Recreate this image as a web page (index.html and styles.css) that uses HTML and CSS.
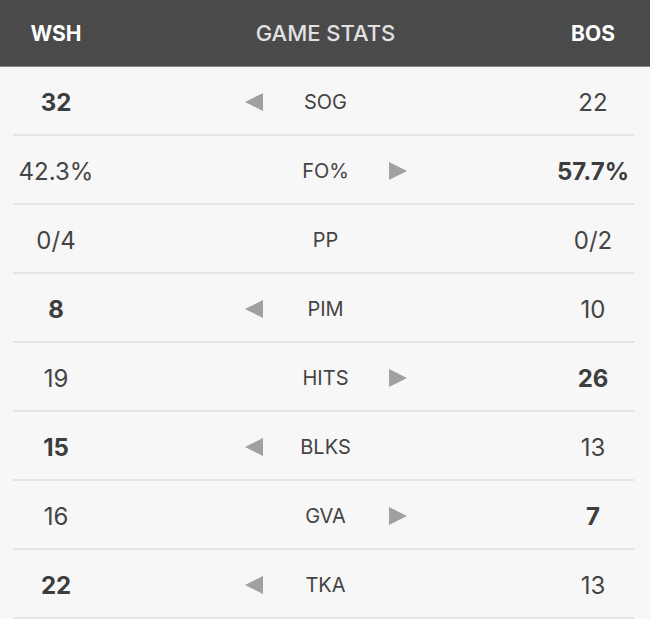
FILE: index.html
```html
<!DOCTYPE html>
<html lang="en">
<head>
<meta charset="utf-8">
<title>Game Stats</title>
<link rel="stylesheet" href="styles.css">
</head>
<body>
<div class="stats">
  <header class="head">
    <div class="grid">
      <div class="team">WSH</div>
      <div class="title">GAME STATS</div>
      <div class="team">BOS</div>
    </div>
  </header>
  <div class="row"><div class="grid">
    <div class="val bold">32</div>
    <div class="mid"><span class="tri left"></span><span class="label">SOG</span><span class="tri"></span></div>
    <div class="val">22</div>
  </div></div>
  <div class="row"><div class="grid">
    <div class="val">42.3%</div>
    <div class="mid"><span class="tri"></span><span class="label">FO%</span><span class="tri right"></span></div>
    <div class="val bold">57.7%</div>
  </div></div>
  <div class="row"><div class="grid">
    <div class="val">0/4</div>
    <div class="mid"><span class="tri"></span><span class="label">PP</span><span class="tri"></span></div>
    <div class="val">0/2</div>
  </div></div>
  <div class="row"><div class="grid">
    <div class="val bold">8</div>
    <div class="mid"><span class="tri left"></span><span class="label">PIM</span><span class="tri"></span></div>
    <div class="val">10</div>
  </div></div>
  <div class="row"><div class="grid">
    <div class="val">19</div>
    <div class="mid"><span class="tri"></span><span class="label">HITS</span><span class="tri right"></span></div>
    <div class="val bold">26</div>
  </div></div>
  <div class="row"><div class="grid">
    <div class="val bold">15</div>
    <div class="mid"><span class="tri left"></span><span class="label">BLKS</span><span class="tri"></span></div>
    <div class="val">13</div>
  </div></div>
  <div class="row"><div class="grid">
    <div class="val">16</div>
    <div class="mid"><span class="tri"></span><span class="label">GVA</span><span class="tri right"></span></div>
    <div class="val bold">7</div>
  </div></div>
  <div class="row"><div class="grid">
    <div class="val bold">22</div>
    <div class="mid"><span class="tri left"></span><span class="label">TKA</span><span class="tri"></span></div>
    <div class="val">13</div>
  </div></div>
</div>
</body>
</html>
```

FILE: styles.css
```css
* { box-sizing: border-box; }
html, body {
  margin: 0;
  padding: 0;
  background: #f7f7f7;
  font-family: Inter, "Liberation Sans", sans-serif;
  color: #444;
}
.stats { width: 650px; }
.head {
  height: 67px;
  background: #4a4a4a;
  border-bottom: 1px solid #8a8a8a;
  padding: 0 16px 0 13px;
}
.grid {
  display: grid;
  grid-template-columns: 86px 1fr 82px;
  align-items: center;
  height: 100%;
}
.team {
  text-align: center;
  color: #fff;
  font-weight: 700;
  font-size: 21px;
}
.title {
  text-align: center;
  color: #e2e2e2;
  font-weight: 500;
  font-size: 22px;
}
.row {
  height: 69px;
  margin: 0 16px 0 13px;
  padding-top: 3px;
  border-bottom: 2px solid #e4e4e4;
}
.val {
  text-align: center;
  font-size: 24px;
  font-weight: 400;
  color: #444;
  white-space: nowrap;
}
.val.bold { font-weight: 700; color: #3d3d3d; }
.mid {
  display: flex;
  justify-content: center;
  align-items: center;
}
.label {
  width: 126px;
  text-align: center;
  font-size: 20px;
  color: #444;
}
.tri {
  width: 18px;
  height: 19px;
}
.tri.left {
  width: 0;
  height: 0;
  border-top: 9.5px solid transparent;
  border-bottom: 9.5px solid transparent;
  border-right: 18px solid #a0a0a0;
}
.tri.right {
  width: 0;
  height: 0;
  border-top: 9.5px solid transparent;
  border-bottom: 9.5px solid transparent;
  border-left: 18px solid #a0a0a0;
}
```
